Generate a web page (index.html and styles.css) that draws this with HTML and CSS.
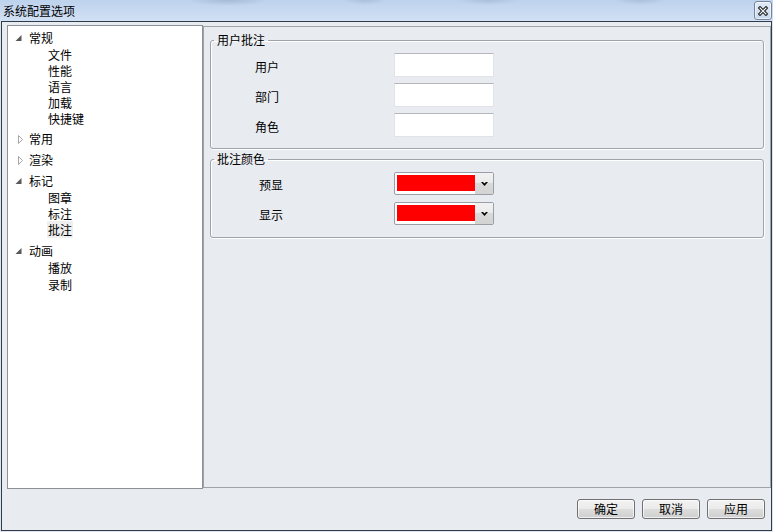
FILE: index.html
```html
<!DOCTYPE html>
<html lang="zh-CN">
<head>
  <meta charset="UTF-8">
  <title>系统配置选项</title>
  <link rel="stylesheet" href="styles.css">
</head>
<body>
  <div class="window">
    <header class="titlebar">
      <span class="title">系统配置选项</span>
      <button class="close-btn" aria-label="关闭">
        <svg width="10" height="10" viewBox="0 0 10 10">
          <path d="M2 2 L8 8 M8 2 L2 8" stroke="#1e1e1e" stroke-width="3.2" stroke-linecap="square"/>
          <path d="M2 2 L8 8 M8 2 L2 8" stroke="#fff" stroke-width="1.1" stroke-linecap="square"/>
        </svg>
      </button>
    </header>

    <div class="frame">
      <div class="panels">
        <!-- 左侧树 -->
        <ul class="tree">
          <li class="node">
            <div class="row"><svg class="arrow" viewBox="0 0 15 18"><polygon points="7.5,6 7.5,12 1.5,12" fill="#595959"/></svg><span>常规</span></div>
            <ul class="children">
              <li>文件</li>
              <li>性能</li>
              <li>语言</li>
              <li>加载</li>
              <li>快捷键</li>
            </ul>
          </li>
          <li class="node">
            <div class="row"><svg class="arrow" viewBox="0 0 15 18"><polygon points="4.5,5.5 8.5,9.5 4.5,13.5" fill="#fff" stroke="#a6a6a6"/></svg><span>常用</span></div>
          </li>
          <li class="node">
            <div class="row"><svg class="arrow" viewBox="0 0 15 18"><polygon points="4.5,5.5 8.5,9.5 4.5,13.5" fill="#fff" stroke="#a6a6a6"/></svg><span>渲染</span></div>
          </li>
          <li class="node">
            <div class="row"><svg class="arrow" viewBox="0 0 15 18"><polygon points="7.5,6 7.5,12 1.5,12" fill="#595959"/></svg><span>标记</span></div>
            <ul class="children">
              <li>图章</li>
              <li>标注</li>
              <li><span class="selected">批注</span></li>
            </ul>
          </li>
          <li class="node">
            <div class="row"><svg class="arrow" viewBox="0 0 15 18"><polygon points="7.5,6 7.5,12 1.5,12" fill="#595959"/></svg><span>动画</span></div>
            <ul class="children">
              <li>播放</li>
              <li>录制</li>
            </ul>
          </li>
        </ul>

        <!-- 右侧设置 -->
        <div class="pane">
          <fieldset class="group group-user">
            <legend>用户批注</legend>
            <div class="form">
              <label>用户</label><input type="text">
              <label>部门</label><input type="text">
              <label>角色</label><input type="text">
            </div>
          </fieldset>
          <fieldset class="group group-color">
            <legend>批注颜色</legend>
            <div class="form">
              <label>预显</label>
              <div class="combo"><span class="swatch"></span><span class="drop"><svg width="7" height="5" viewBox="0 0 7 5"><polygon points="0,0 2,0 3.5,1.6 5,0 7,0 3.5,4" fill="#000"/></svg></span></div>
              <label>显示</label>
              <div class="combo"><span class="swatch"></span><span class="drop"><svg width="7" height="5" viewBox="0 0 7 5"><polygon points="0,0 2,0 3.5,1.6 5,0 7,0 3.5,4" fill="#000"/></svg></span></div>
            </div>
          </fieldset>
        </div>
      </div>

      <div class="actions">
        <button class="btn">确定</button>
        <button class="btn">取消</button>
        <button class="btn">应用</button>
      </div>
    </div>
  </div>
</body>
</html>
```

FILE: styles.css
```css
:root {
  --bg: #e8ebf0;
  --frame: #2f3a4a;
  --panel-border: #8b9099;
  --group-border: #a0a4aa;
  --text: #000000;
}
*, *::before, *::after { box-sizing: border-box; }
body {
  margin: 0;
  background: #dfe4ea;
  font-family: "Noto Sans CJK SC", "Microsoft YaHei", sans-serif;
  font-size: 12px;
  color: var(--text);
}
.window {
  width: 773px;
  height: 532px;
  display: flex;
  flex-direction: column;
  background: #dfe4ea;
}
.titlebar {
  height: 21px;
  flex: 0 0 21px;
  display: flex;
  align-items: center;
  justify-content: space-between;
  padding: 0 1px 0 3px;
  background:
    radial-gradient(ellipse 40px 6px at 228px 0, rgba(70, 90, 120, 0.2), transparent),
    radial-gradient(ellipse 22px 5px at 365px 0, rgba(70, 90, 120, 0.16), transparent),
    radial-gradient(ellipse 30px 5px at 488px 0, rgba(70, 90, 120, 0.16), transparent),
    radial-gradient(ellipse 25px 5px at 640px 0, rgba(70, 90, 120, 0.16), transparent),
    linear-gradient(#bdd2ed, #d2e1f4);
}
.title { line-height: 16px; }
.close-btn {
  width: 18px;
  height: 19px;
  padding: 0;
  border: 1px solid #74859b;
  border-radius: 3px;
  background: linear-gradient(#e0eaf6, #c7d8ee);
  box-shadow: inset 0 0 0 1px rgba(255, 255, 255, 0.6);
  display: flex;
  align-items: center;
  justify-content: center;
}
.frame {
  flex: 1;
  margin: 0 1px 1px 1px;
  border: 1px solid var(--frame);
  background: var(--bg);
  display: flex;
  flex-direction: column;
  padding: 3px 0 11px 5px;
}
.panels {
  display: flex;
  height: 464px;
}

/* tree */
.tree {
  width: 196px;
  margin: 0;
  padding: 0;
  list-style: none;
  background: #fff;
  border: 1px solid var(--panel-border);
}
.tree ul { list-style: none; margin: 0; padding: 0; }
.row {
  height: 18px;
  margin-top: 3px;
  padding-left: 6px;
  display: flex;
  align-items: center;
  line-height: 18px;
}
.node:last-child .row { margin-top: 4px; }
.arrow { width: 15px; height: 18px; flex: 0 0 15px; }
.children li {
  height: 16px;
  line-height: 16px;
  padding-left: 40px;
}
.node:last-child .children li { height: 16.5px; }
.selected { background: #efefef; padding: 0 1px; margin-left: -1px; }

/* right pane */
.pane {
  flex: 1;
  margin: 1px 0;
  border: 1px solid #9ea3aa;
  display: flex;
  flex-direction: column;
}
.group {
  margin: 0 6px 0 6px;
  padding: 5px 0 11px 3px;
  border: 1px solid var(--group-border);
  border-radius: 3px;
  box-shadow: inset 1px 1px 0 #fff, 1px 1px 0 #fff;
}
.group-user { margin-top: 5px; }
.group-color { margin-top: 2px; padding-bottom: 12px; }
legend {
  padding: 0 3px;
  line-height: 16px;
  font-size: 12px;
}
.form {
  display: grid;
  grid-template-columns: 139px 100px;
  align-items: center;
  margin-left: 41px;
}
.group-user .form { grid-auto-rows: 24px; row-gap: 6px; }
.group-color .form {
  grid-template-columns: 135px 100px;
  margin-left: 45px;
  grid-auto-rows: 23px;
  row-gap: 7px;
}
label { padding-top: 3px; line-height: 16px; }
input {
  width: 100px;
  height: 24px;
  margin: 0;
  padding: 0 3px;
  background: #fff;
  border: 1px solid #e2e3ea;
  border-top-color: #b5b7bd;
  font: inherit;
}
.combo {
  width: 100px;
  height: 23px;
  display: flex;
  background: #fff;
  border: 1px solid #9a9ea6;
  border-radius: 2px;
}
.swatch {
  width: 78px;
  margin: 2px 0 3px 2px;
  background: #ff0000;
}
.drop {
  width: 18px;
  display: flex;
  align-items: center;
  justify-content: center;
  padding-top: 1px;
  background: linear-gradient(#f2f2f2 0%, #ebebeb 45%, #d9d9d9 50%, #d3d3d3 100%);
  border-radius: 0 1px 1px 0;
}

/* buttons */
.actions {
  display: flex;
  justify-content: flex-end;
  gap: 7px;
  margin: 10px 6px 0 0;
}
.btn {
  width: 58px;
  height: 20px;
  padding: 0;
  border: 1px solid #707070;
  border-radius: 3px;
  background: linear-gradient(#f2f2f2 0%, #ebebeb 50%, #dddddd 51%, #cfcfcf 100%);
  box-shadow: inset 0 0 0 1px rgba(255, 255, 255, 0.7);
  font: inherit;
  line-height: 16px;
  color: #000;
}
```
